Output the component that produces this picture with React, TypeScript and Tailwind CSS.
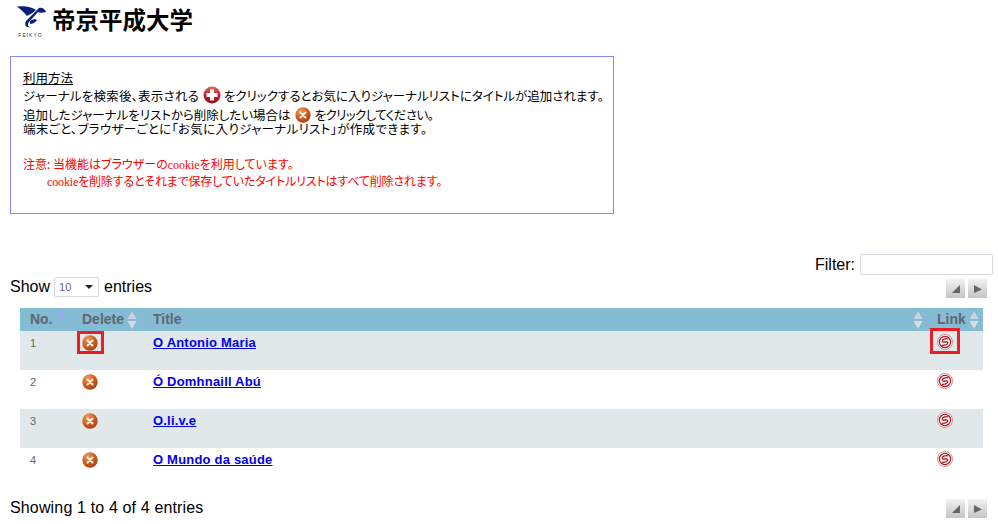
import { useId } from 'react'

const ROWS = [
  { no: 1, title: 'O Antonio Maria', marked: true },
  { no: 2, title: 'Ó Domhnaill Abú', marked: false },
  { no: 3, title: 'O.li.v.e', marked: false },
  { no: 4, title: 'O Mundo da saúde', marked: false },
]

function Logo() {
  return (
    <div className="flex w-[31px] flex-col items-center">
      <svg width="30" height="22" viewBox="0 0 30 22">
        <path d="M1 0.5C8 -0.5 16 1 20 4C17 7 13 9 11 10C8 6 4 3 1 0.5Z" fill="#0b1f78" />
        <path d="M23 2C26 1 29 3 30 6C26 7 24 7 22 6L13 16C11 19 12 21 15 21C10 22 8 19 10 15Z" fill="#0b1f78" />
        <path d="M14 15C17 13 20 13 21 14C19 17 16 18 14 18Z" fill="#0b1f78" />
      </svg>
      <span className="mt-[5px] text-[5px] leading-[5px] tracking-[1px] text-[#334]">FEIKYO</span>
    </div>
  )
}

function PlusIcon() {
  const id = useId()
  return (
    <svg width="18" height="18" viewBox="0 0 18 18" className="ml-[4px] mr-[3px] shrink-0">
      <defs>
        <linearGradient id={id} x1="0" y1="0" x2="0" y2="1">
          <stop offset="0" stopColor="#e0686a" />
          <stop offset="0.5" stopColor="#c81e24" />
          <stop offset="1" stopColor="#8f0f14" />
        </linearGradient>
      </defs>
      <circle cx="9" cy="9" r="8.5" fill={`url(#${id})`} />
      <path d="M7 3.5H11V7H14.5V11H11V14.5H7V11H3.5V7H7Z" fill="#fff" />
    </svg>
  )
}

function DeleteIcon() {
  const id = useId()
  return (
    <svg width="16" height="16" viewBox="0 0 16 16" className="block">
      <defs>
        <radialGradient id={id} cx="0.35" cy="0.25" r="0.85">
          <stop offset="0" stopColor="#ee9a5c" />
          <stop offset="0.55" stopColor="#cf5a1c" />
          <stop offset="1" stopColor="#a33a10" />
        </radialGradient>
      </defs>
      <circle cx="8" cy="8" r="7.7" fill={`url(#${id})`} />
      <path d="M5.5 5.5L10.5 10.5M10.5 5.5L5.5 10.5" stroke="#fff4ea" strokeWidth="2" strokeLinecap="round" />
    </svg>
  )
}

function LinkIcon() {
  return (
    <svg width="16" height="16" viewBox="0 0 16 16" className="block">
      <circle cx="8" cy="8" r="7.5" fill="#fff" stroke="#d98a8e" strokeWidth="1" />
      <circle cx="8" cy="8" r="5.6" fill="#fff" stroke="#b3141c" strokeWidth="1.2" />
      <path d="M11.2 5C8.5 3.9 4.8 5.6 5.3 7.5C5.8 9 10 7 10.7 8.5C11.2 10.2 7.6 12 4.8 11" fill="none" stroke="#a80f17" strokeWidth="1.3" />
    </svg>
  )
}

function SortArrows({ active = false }: { active?: boolean }) {
  if (active) {
    return (
      <svg width="10" height="9" viewBox="0 0 10 9" className="ml-[3px] self-start">
        <path d="M5 0L10 8H0Z" fill="#a5a5f5" />
      </svg>
    )
  }
  return (
    <svg width="10" height="20" viewBox="0 0 10 20" className="ml-[3px] shrink-0">
      <path d="M5 1L9.5 9H0.5Z" fill="#c8d4dc" />
      <path d="M5 19L9.5 11H0.5Z" fill="#d8dce0" />
    </svg>
  )
}

function PageButton({ dir }: { dir: 'prev' | 'next' }) {
  return (
    <span className="flex h-[19px] w-[19px] items-center justify-center bg-gradient-to-b from-[#f2f2f2] to-[#c4c4c4]">
      <svg width="10" height="10" viewBox="0 0 10 10">
        <path d={dir === 'prev' ? 'M9 1V9H1Z' : 'M1 1L9 5.5L1 9Z'} fill="#666" />
      </svg>
    </span>
  )
}

function Paging() {
  return (
    <div className="flex gap-[3px]">
      <PageButton dir="prev" />
      <PageButton dir="next" />
    </div>
  )
}

export default function App() {
  return (
    <div className="h-[524px] w-[998px] overflow-hidden bg-white font-['Liberation_Sans',sans-serif] text-black">
      {/* Header */}
      <div className="flex h-[56px] items-start gap-[6px] pl-[15px] pt-[6px]">
        <Logo />
        <h1 className="-mt-[2px] font-['Noto_Sans_CJK_JP',sans-serif] text-[23.5px] font-bold leading-[30px]">帝京平成大学</h1>
      </div>

      {/* Usage box */}
      <div className="ml-[10px] h-[158px] w-[604px] border border-[#8888ff] pl-[12px] pt-[13px] font-['Noto_Sans_CJK_JP',sans-serif] text-[12.5px] [font-feature-settings:'palt']">
        <p className="h-[15px] leading-[15px] underline">利用方法</p>
        <p className="flex h-[20px] items-center whitespace-nowrap leading-[15px]">
          <span className="tracking-[0.2px]">ジャーナルを検索後、表示される</span>
          <PlusIcon />
          <span>をクリックするとお気に入りジャーナルリストにタイトルが追加されます。</span>
        </p>
        <p className="mt-[3px] flex h-[14px] items-center whitespace-nowrap leading-[14px]">
          <span>追加したジャーナルをリストから削除したい場合は</span>
          <span className="mx-[4px]"><DeleteIcon /></span>
          <span className="tracking-[-0.6px]">をクリックしてください。</span>
        </p>
        <p className="h-[14px] whitespace-nowrap leading-[14px] tracking-[0.33px]">端末ごと、ブラウザーごとに「お気に入りジャーナルリスト」が作成できます。</p>
        <p className="mt-[19px] h-[17px] whitespace-nowrap text-[12px] leading-[17px] text-[#ff0000]">注意: 当機能はブラウザーの<span className="font-['Liberation_Serif']">cookie</span>を利用しています。</p>
        <p className="h-[17px] whitespace-nowrap pl-[24px] text-[12px] leading-[17px] tracking-[-0.15px] text-[#ff0000]"><span className="font-['Liberation_Serif']">cookie</span>を削除するとそれまで保存していたタイトルリストはすべて削除されます。</p>
      </div>

      {/* Filter */}
      <div className="mt-[39px] flex h-[22px] items-center justify-end gap-[5px] pr-[5px] text-[16px]">
        <label htmlFor="filter" className="pt-[1px]">Filter:</label>
        <input id="filter" className="h-[21px] w-[133px] rounded-[2px] border border-[#d5d9e2] bg-white" />
      </div>

      {/* Length + paging */}
      <div className="mt-[4px] flex h-[19px] items-start justify-between pl-[10px] pr-[11px] text-[16px]">
        <div className="-mt-[2px] flex h-[20px] items-center gap-[4px]">
          <span>Show</span>
          <span className="flex h-[20px] w-[45px] items-center justify-between rounded-[2px] border border-[#d5d9e2] pl-[4px] pr-[5px] text-[11px] text-[#666688]">
            10
            <svg width="8" height="4" viewBox="0 0 8 4"><path d="M0 0H8L4 4Z" fill="#222" /></svg>
          </span>
          <span className="ml-[1px]">entries</span>
        </div>
        <Paging />
      </div>

      {/* Table */}
      <table className="ml-[20px] mt-[10px] w-[963px] table-fixed border-collapse">
        <colgroup>
          <col className="w-[52px]" />
          <col className="w-[71px]" />
          <col />
          <col className="w-[50px]" />
        </colgroup>
        <thead>
          <tr className="h-[23px] bg-[#84bcd4] text-left text-[14px] font-bold text-[#5f6670]">
            <th className="pl-[10px]"><span className="flex h-[20px] items-center">No.<SortArrows active /></span></th>
            <th className="pl-[10px]"><span className="flex items-center">Delete<SortArrows /></span></th>
            <th className="pl-[10px] pr-[10px]"><span className="flex items-center justify-between">Title<SortArrows /></span></th>
            <th className="pl-[4px]"><span className="flex items-center">Link<SortArrows /></span></th>
          </tr>
        </thead>
        <tbody>
          {ROWS.map((r) => (
            <tr key={r.no} className={`h-[39px] align-top ${r.no % 2 === 1 ? 'bg-[#e1e8ea]' : 'bg-white'}`}>
              <td className="pl-[10px] pt-[4px] text-[11px] text-[#666]">{r.no}</td>
              <td className="pl-[10px] pt-[4px]">
                <span className="relative block w-[16px]">
                  <DeleteIcon />
                  {r.marked && <span className="absolute -bottom-[3px] -left-[5px] -right-[6px] -top-[4px] border-[3px] border-[#ed1c24]" />}
                </span>
              </td>
              <td className="pl-[10px] pt-[4px] text-[13px] leading-[16px]">
                <a href="#" className="font-bold tracking-[0.2px] text-[#0000ee] underline">{r.title}</a>
              </td>
              <td className="pl-[4px] pt-[3px]">
                <span className="relative block w-[16px]">
                  <LinkIcon />
                  {r.marked && <span className="absolute -bottom-[4px] -left-[7px] -right-[7px] -top-[6px] border-[3px] border-[#ed1c24]" />}
                </span>
              </td>
            </tr>
          ))}
        </tbody>
      </table>

      {/* Footer */}
      <div className="mt-[12px] flex h-[19px] items-start justify-between pl-[10px] pr-[11px] text-[16px]">
        <span className="-mt-[3px] tracking-[0.15px]">Showing 1 to 4 of 4 entries</span>
        <Paging />
      </div>
    </div>
  )
}
